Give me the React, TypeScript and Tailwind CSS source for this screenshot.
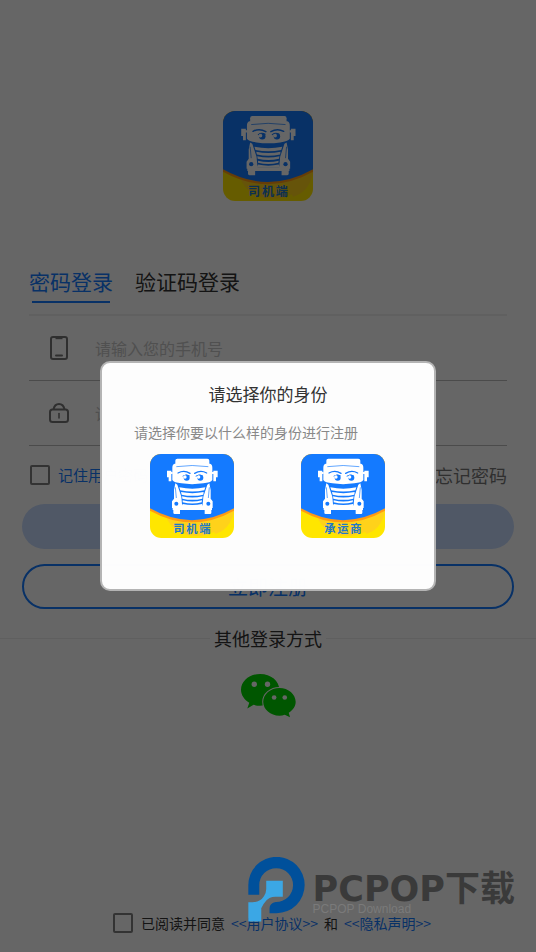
import { useState } from "react";

type Role = "driver" | "carrier";

const roles: { id: Role; label: string }[] = [
  { id: "driver", label: "司机端" },
  { id: "carrier", label: "承运商" },
];

function TruckLogo({ label, className }: { label: string; className?: string }) {
  const clip = `clip-${label}`;
  return (
    <svg viewBox="0 0 252 252" className={className} role="img" aria-label={label}>
      <defs>
        <clipPath id={clip}>
          <rect width="252" height="252" rx="34" />
        </clipPath>
      </defs>
      <g clipPath={`url(#${clip})`}>
        <rect width="252" height="252" fill="#ffe600" />
        <ellipse cx="140" cy="170" rx="94" ry="76" fill="#ffd21a" />
        <path d="M150 150H252V172C244 214 222 232 196 240Z" fill="#ffd21a" />
        <path d="M0 0H252V170Q126 240 0 170Z" fill="#ff9a14" />
        <path d="M0 0H252V163Q126 234 0 163Z" fill="#147aff" />
      </g>

      {/* cab */}
      <g fill="#fff">
        <path d="M82 14H172Q178 14 178 20V30H76V20Q76 14 82 14Z" />
        <path d="M74 29Q126 23 180 29Q187 31 187 41V78Q182 86 160 88Q126 93 94 88Q72 86 67 78V41Q67 31 74 29Z" />
        <path d="M51 50H64V54H68V60H64V82H56V70H51Z" />
        <path d="M203 50H190V54H186V60H190V82H198V70H203Z" />
        <path d="M76 88L82 92L94 128L97 162H66V142L72 134V108Z" />
        <path d="M178 88L172 92L160 128L157 162H188V142L182 134V108Z" />
        <path d="M68 158H186V168H68Z" />
        <path d="M70 160H90V180H74Q70 180 70 176Z" />
        <path d="M184 160H164V180H180Q184 180 184 176Z" />
        <path d="M88 100Q127 108 166 100L163 109Q127 116 91 109Z" />
        <path d="M93 114Q127 121 161 114L160 122Q127 129 95 122Z" />
        <path d="M96 127Q127 134 158 127L157 134Q127 141 97 134Z" />
        <path d="M98 139Q127 146 156 139L155 145Q127 152 98 145Z" />
        <path d="M98 150Q127 156 156 150L160 159H94Z" />
      </g>
      <g fill="none" stroke="#147aff">
        <path d="M79 38Q126 31 175 38" strokeWidth="2" />
        <path d="M76 100L79 132" strokeWidth="2" />
        <path d="M178 100L175 132" strokeWidth="2" />
      </g>
      <g fill="none" stroke="#147aff" strokeLinecap="round" strokeWidth="4">
        <path d="M84 57Q102 47 120 58" />
        <path d="M134 58Q152 47 170 57" />
        <path d="M99 66Q108 59 118 65" strokeWidth="3" />
        <path d="M138 66Q147 59 157 65" strokeWidth="3" />
      </g>
      <g fill="#147aff">
        <circle cx="110" cy="71" r="9" />
        <circle cx="151" cy="71" r="9" />
        <circle cx="79" cy="149" r="6" />
        <circle cx="175" cy="149" r="6" />
      </g>
      <circle cx="105" cy="69" r="5" fill="#fff" />
      <circle cx="146" cy="69" r="5" fill="#fff" />

      <text
        x="87 126 165"
        y="238"
        textAnchor="middle"
        fontSize="34"
        fontWeight="700"
        fill="#1f78c8"
      >
        {label}
      </text>
    </svg>
  );
}

function PhoneIcon() {
  return (
    <svg viewBox="0 0 18 24" className="h-6 w-[18px]" fill="none" stroke="#777" strokeWidth="2">
      <rect x="1" y="1" width="16" height="22" rx="2" />
      <path d="M5.5 2H12.5" strokeWidth="2.4" />
      <path d="M6 19.5H12" strokeLinecap="round" />
    </svg>
  );
}

function LockIcon() {
  return (
    <svg viewBox="0 0 20 20" className="size-5" fill="none" stroke="#777" strokeWidth="2">
      <rect x="1" y="6.5" width="18" height="12.5" rx="2.5" />
      <path d="M4.5 6.5Q5.5 1 10 1Q14.5 1 15.5 6.5" />
      <path d="M10 10.5V15" strokeLinecap="round" strokeWidth="1.6" />
    </svg>
  );
}

function WechatIcon() {
  return (
    <svg viewBox="120 160 166 134" className="h-[45px] w-[55px]">
      <path
        d="M178 162C210 162 236 183 236 210C236 238 210 258 178 258C171 258 164 257 158 255L139 266L145 249C130 240 120 226 120 210C120 183 146 162 178 162Z"
        fill="#00d600"
      />
      <circle cx="160" cy="193" r="8" fill="#fff" />
      <circle cx="200" cy="193" r="8" fill="#fff" />
      <path
        d="M236 204C263 204 285 223 285 246C285 260 277 271 264 279L268 293L252 285C247 287 242 288 236 288C209 288 187 269 187 246C187 223 209 204 236 204Z"
        fill="#00d600"
        stroke="#fff"
        strokeWidth="6"
        paintOrder="stroke"
      />
      <circle cx="220" cy="233" r="7" fill="#fff" />
      <circle cx="252" cy="233" r="7" fill="#fff" />
    </svg>
  );
}

function Watermark() {
  return (
    <div className="pointer-events-none absolute right-[21px] bottom-[30px] flex items-start gap-2">
      <svg viewBox="36 22 172 195" className="h-[65px] w-[57px]">
        <path
          d="M37 135V106A85 85 0 1 1 122 191H101V177Q101 160 120 157A51 51 0 1 0 70 106V135Z"
          fill="#00509b"
        />
        <path
          d="M91 93H141V141H118Q100 142 92 152Q84 160 76 176V216H37V158H50Q74 157 84 140Q91 130 91 118Z"
          fill="#3ba7e5"
        />
      </svg>
      <div className="pt-4">
        <p className="font-['DejaVu_Sans','Noto_Sans_CJK_SC',sans-serif] text-[35px] leading-8 font-bold whitespace-nowrap text-[#3a3a3a]">
          PCPOP下载
        </p>
        <p className="font-['Liberation_Sans',sans-serif] text-xs leading-2 text-[#7a7a7a]">
          PCPOP Download
        </p>
      </div>
    </div>
  );
}

const checkbox =
  "size-5 shrink-0 appearance-none rounded-xs border-2 border-[#808080] bg-white checked:bg-[#147aff]";

export default function App() {
  const [tab, setTab] = useState<"password" | "code">("password");
  const [phone, setPhone] = useState("");
  const [password, setPassword] = useState("");
  const [role, setRole] = useState<Role | null>(null);

  return (
    <div className="relative flex min-h-screen flex-col bg-white font-['Noto_Sans_CJK_SC',sans-serif] text-[#333]">
      <main className="flex flex-1 flex-col pt-[111px]">
        <TruckLogo label="司机端" className="size-[90px] self-center" />

        <form className="flex flex-col" onSubmit={(e) => e.preventDefault()}>
          {/* TABS */}
          <div className="mx-[29px] mt-16 flex gap-[22px] border-b-2 border-[#f0f0f0] pb-[11px] text-[21px] leading-8">
            <button
              type="button"
              onClick={() => setTab("password")}
              className={tab === "password" ? "flex flex-col items-center text-[#147aff]" : ""}
            >
              密码登录
              {tab === "password" && <span className="mt-1 h-0.5 w-[78px] bg-[#147aff]" />}
            </button>
            <button
              type="button"
              onClick={() => setTab("code")}
              className={tab === "code" ? "text-[#147aff]" : "self-start"}
            >
              验证码登录
            </button>
          </div>

          {/* FIELDS */}
          <label className="mx-[29px] flex h-[65px] items-center gap-[27px] border-b border-[#bbb] pl-[21px]">
            <PhoneIcon />
            <input
              type="tel"
              aria-label="手机号"
              value={phone}
              onChange={(e) => setPhone(e.target.value)}
              placeholder="请输入您的手机号"
              className="min-w-0 flex-1 text-base outline-none placeholder:text-[#c8c8c8]"
            />
          </label>
          <label className="mx-[29px] flex h-[65px] items-center gap-[26px] border-b border-[#bbb] pl-5">
            <LockIcon />
            <input
              type="password"
              aria-label="密码"
              value={password}
              onChange={(e) => setPassword(e.target.value)}
              placeholder="请输入您的密码"
              className="min-w-0 flex-1 text-base outline-none placeholder:text-[#c8c8c8]"
            />
          </label>

          <div className="mx-[29px] flex h-[58px] items-center justify-between">
            <label className="flex items-center gap-2 pl-px text-[15px] text-[#147aff]">
              <input type="checkbox" className={checkbox} />
              记住用户密码
            </label>
            <a href="#forgot" className="text-lg text-[#777]">
              忘记密码
            </a>
          </div>

          <button
            type="submit"
            className="mx-[22px] h-[45px] rounded-full bg-[#c8dcff] text-xl text-white"
          >
            登录
          </button>
          <button
            type="button"
            className="mx-[22px] mt-[15px] h-[45px] rounded-full border-2 border-[#147aff] text-xl text-[#147aff]"
          >
            立即注册
          </button>
        </form>

        <div className="mt-[15px] flex items-center gap-1">
          <span className="h-px flex-1 bg-[#eee]" />
          <h2 className="text-lg leading-7">其他登录方式</h2>
          <span className="h-px flex-1 bg-[#eee]" />
        </div>
        <button type="button" aria-label="微信登录" className="mt-[21px] self-center">
          <WechatIcon />
        </button>
      </main>

      <footer className="flex items-center justify-center gap-1.5 pb-[17px] pl-2 text-sm leading-6">
        <label className="flex items-center gap-2">
          <input type="checkbox" className={checkbox} />
          已阅读并同意
        </label>
        <a href="#terms" className="text-[#147aff]">
          &lt;&lt;用户协议&gt;&gt;
        </a>
        和
        <a href="#privacy" className="text-[#147aff]">
          &lt;&lt;隐私声明&gt;&gt;
        </a>
      </footer>

      {/* ROLE DIALOG */}
      <div className="absolute inset-0 flex items-center justify-center bg-black/60">
        <div
          role="dialog"
          aria-modal="true"
          aria-labelledby="role-title"
          className="w-[336px] max-w-full rounded-[10px] border-2 border-[#b4b4b4] bg-white/99 px-8 pt-[19px] pb-[51px]"
        >
          <h1 id="role-title" className="text-center text-[17px] leading-6">
            请选择你的身份
          </h1>
          <p className="mt-4 text-sm leading-5 text-[#888]">请选择你要以什么样的身份进行注册</p>
          <div className="mt-3 flex justify-between pr-[17px] pl-4">
            {roles.map((r) => (
              <button
                key={r.id}
                type="button"
                aria-pressed={role === r.id}
                onClick={() => setRole(r.id)}
              >
                <TruckLogo label={r.label} className="size-[84px]" />
              </button>
            ))}
          </div>
        </div>
      </div>

      <Watermark />
    </div>
  );
}
